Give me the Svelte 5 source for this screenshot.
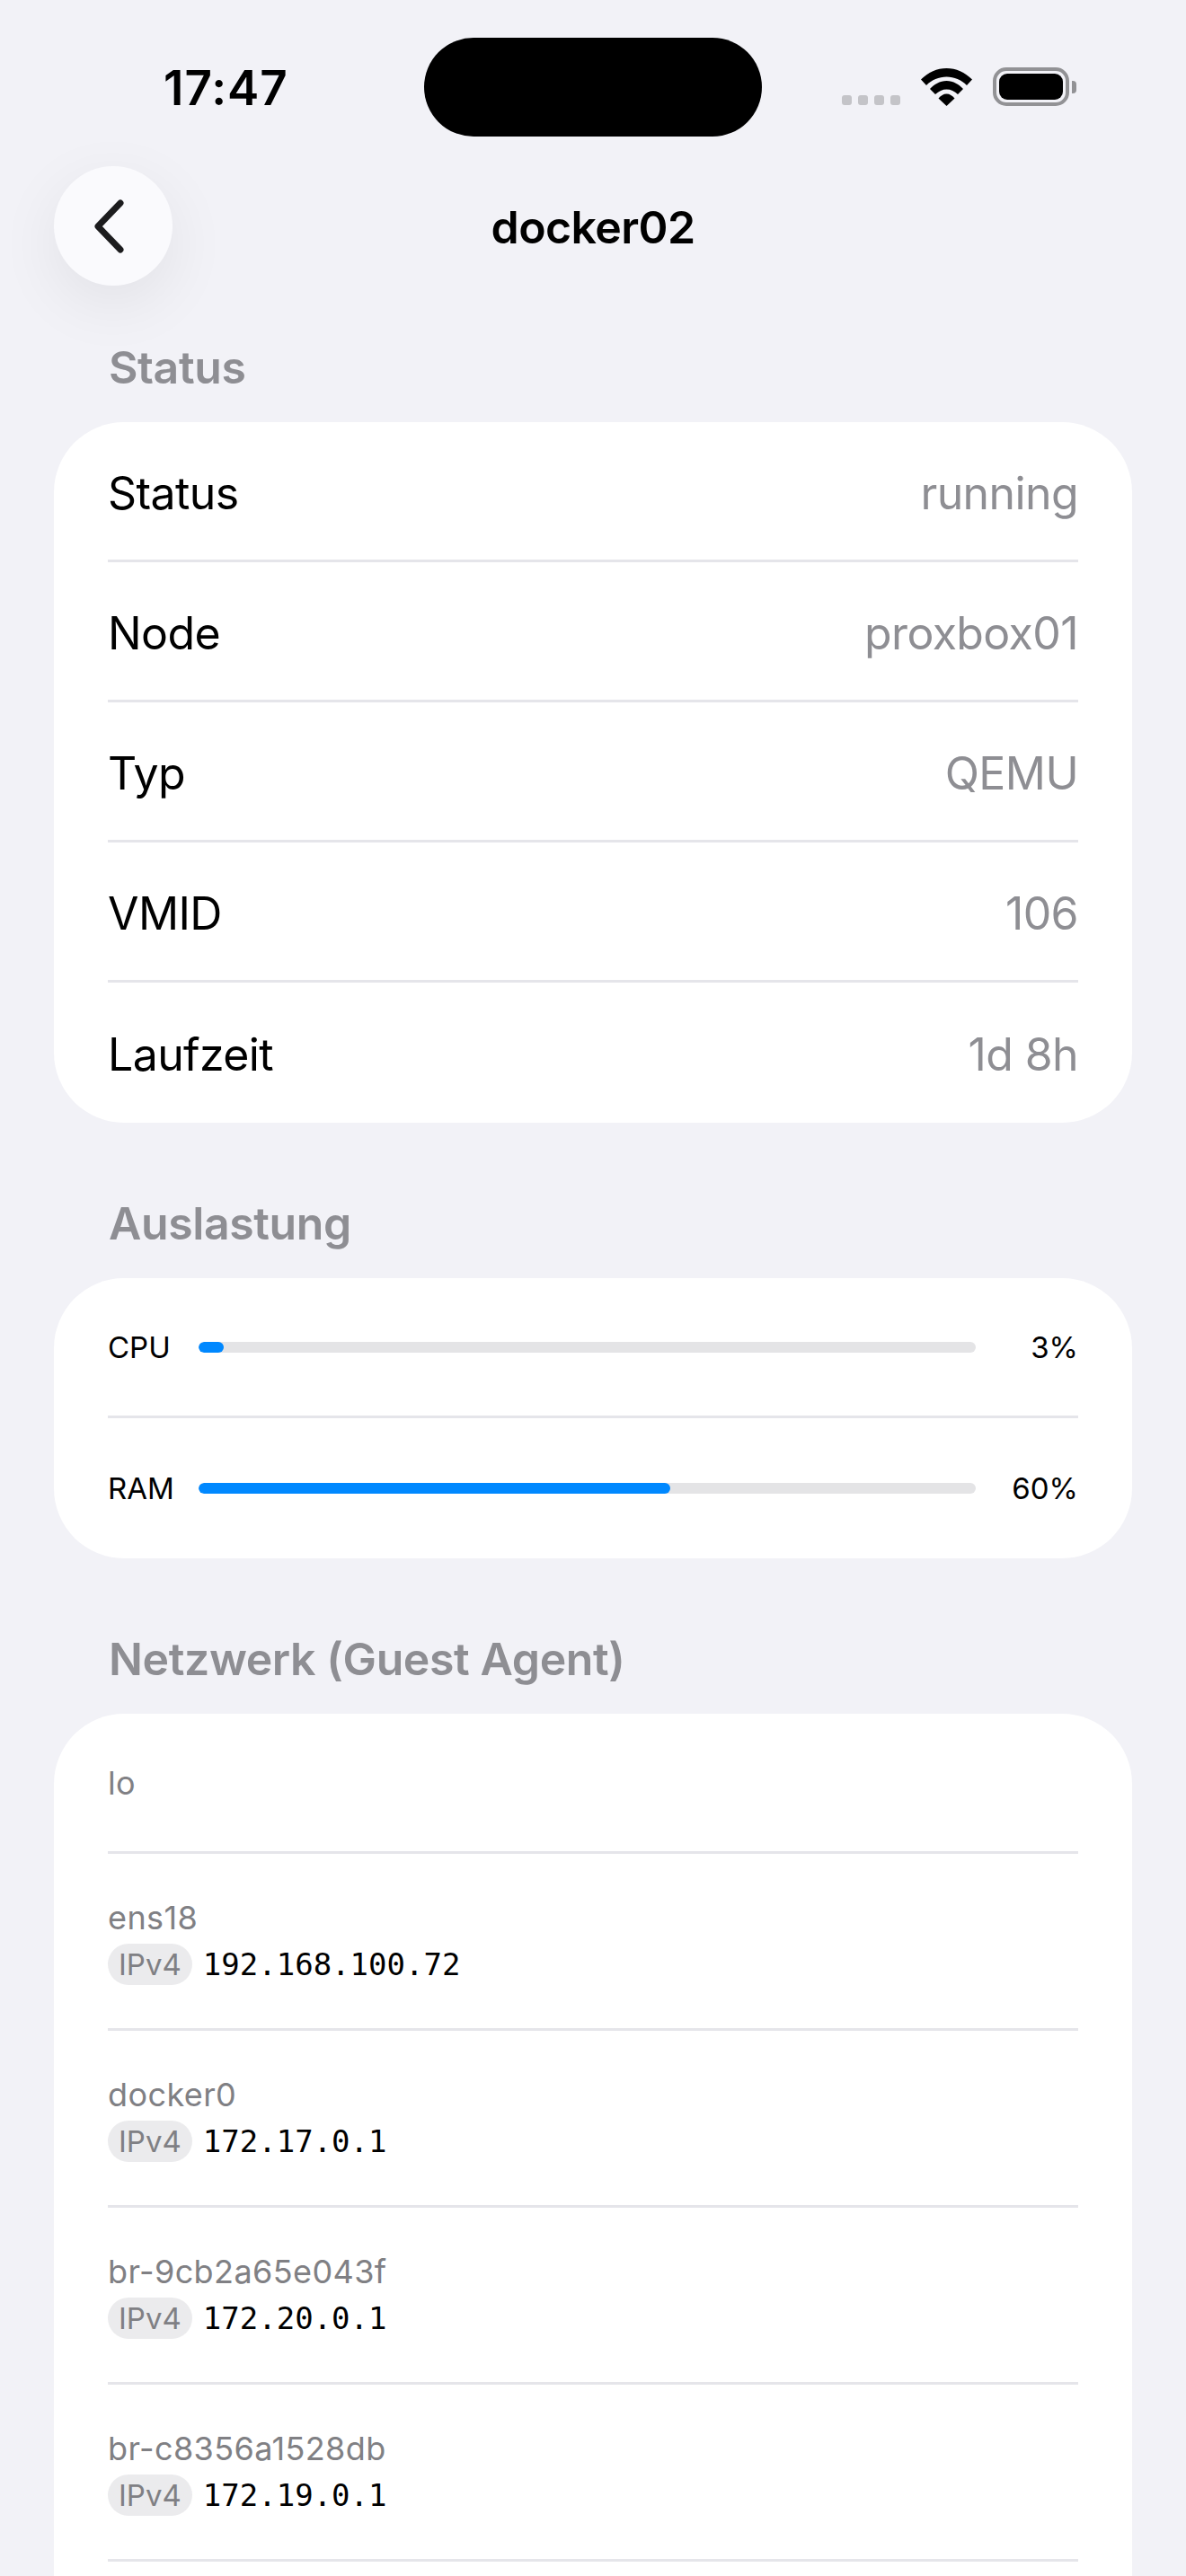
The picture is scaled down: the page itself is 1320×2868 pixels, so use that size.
<script>
    const info = [
        ["Status", "running"],
        ["Node", "proxbox01"],
        ["Typ", "QEMU"],
        ["VMID", "106"],
        ["Laufzeit", "1d 8h"],
    ];
    const usage = [
        { label: "CPU", percent: 3, bar: 3.2 },
        { label: "RAM", percent: 60, bar: 60.7 },
    ];
    const networks = [
        { name: "lo" },
        { name: "ens18", ip: "192.168.100.72" },
        { name: "docker0", ip: "172.17.0.1" },
        { name: "br-9cb2a65e043f", ip: "172.20.0.1" },
        { name: "br-c8356a1528db", ip: "172.19.0.1" },
    ];
</script>

<div class="screen">
    <header class="statusbar">
        <span class="time">17:47</span>
        <div class="island"></div>
        <div class="indicators">
            <div class="dots"><i></i><i></i><i></i><i></i></div>
            <svg class="wifi" width="57" height="42" viewBox="0 0 57 42">
                <path d="M0 12.500C8 4.500 18 0 28.500 0S49 4.500 57 12.500L51 19C45 13 37 9.500 28.500 9.500S12 13 6 19Z" />
                <path d="M10 23C14.500 18 21 14 28.500 14S42.500 18 47 23L41 29C37.500 25.500 33 23.500 28.500 23.500S20 25.500 16 29Z" />
                <path d="M19.500 33.500C22 30.500 25 28.500 28.500 28.500S35 30.500 37.500 33.500L28.500 42Z" />
            </svg>
            <div class="battery"><div class="cell"></div></div>
            <div class="nub"></div>
        </div>
    </header>

    <nav class="navbar">
        <button class="back" type="button" aria-label="Zurück">
            <svg width="42" height="60" viewBox="0 0 42 60" fill="none">
                <path d="M33 4 8 30l25 26" stroke="#1c1c1e" stroke-width="7" stroke-linecap="round" stroke-linejoin="round" />
            </svg>
        </button>
        <h1>docker02</h1>
    </nav>

    <section class="first">
        <h2>Status</h2>
        <div class="card">
            {#each info as [label, value]}
                <div class="row">
                    <span>{label}</span>
                    <span class="value">{value}</span>
                </div>
            {/each}
        </div>
    </section>

    <section>
        <h2>Auslastung</h2>
        <div class="card">
            {#each usage as item}
                <div class="row usage">
                    <span class="label">{item.label}</span>
                    <div class="track">
                        <div class="fill" style="width: {item.bar}%"></div>
                    </div>
                    <span class="percent">{item.percent}%</span>
                </div>
            {/each}
        </div>
    </section>

    <section>
        <h2>Netzwerk (Guest Agent)</h2>
        <div class="card open">
            {#each networks as net}
                <div class="row net">
                    <div class="iface">{net.name}</div>
                    {#if net.ip}
                        <div class="address">
                            <span class="tag">IPv4</span>
                            <span class="ip">{net.ip}</span>
                        </div>
                    {/if}
                </div>
            {/each}
        </div>
    </section>
</div>

<style>
    :global(body) {
        margin: 0;
        background: #f2f2f7;
    }
    .screen {
        width: 1320px;
        height: 2868px;
        overflow: hidden;
        background: #f2f2f7;
        font-family: Inter, "Liberation Sans", sans-serif;
        color: #000;
    }
    .statusbar {
        position: relative;
        height: 185px;
    }
    .time {
        position: absolute;
        left: 182px;
        top: 67px;
        font-size: 53px;
        line-height: 62px;
        font-weight: 600;
        letter-spacing: 1px;
    }
    .island {
        position: absolute;
        left: 472px;
        top: 42px;
        width: 376px;
        height: 110px;
        border-radius: 55px;
        background: #000;
    }
    .indicators {
        position: absolute;
        left: 937px;
        top: 75px;
        height: 43px;
        display: flex;
        align-items: center;
    }
    .dots {
        align-self: flex-end;
        display: flex;
        gap: 7px;
        margin-bottom: 1px;
        margin-right: 23px;
    }
    .dots i {
        width: 11px;
        height: 11px;
        border-radius: 3px;
        background: #c4c4c8;
    }
    .wifi {
        fill: #000;
        margin-right: 23px;
    }
    .battery {
        width: 85px;
        height: 43px;
        box-sizing: border-box;
        border: 4px solid #929295;
        border-radius: 15px;
        padding: 3px;
    }
    .cell {
        height: 100%;
        border-radius: 9px;
        background: #000;
    }
    .nub {
        width: 5px;
        height: 14px;
        margin-left: 3px;
        border-radius: 0 4px 4px 0;
        background: #929295;
    }
    .navbar {
        position: relative;
        height: 133px;
        display: flex;
        align-items: center;
        justify-content: center;
    }
    .back {
        position: absolute;
        left: 60px;
        top: 0;
        width: 132px;
        height: 133px;
        padding: 0 8px 0 0;
        border: 0;
        border-radius: 50%;
        background: #fafafd;
        box-shadow: 0 20px 70px rgba(0, 0, 0, 0.07);
        display: flex;
        align-items: center;
        justify-content: center;
    }
    h1 {
        margin: 2px 0 0;
        font-size: 50px;
        line-height: 62px;
        font-weight: 600;
        letter-spacing: -0.6px;
    }
    section {
        padding: 0 60px;
        margin-top: 82px;
    }
    section.first {
        margin-top: 61px;
    }
    h2 {
        margin: 0 0 31px;
        padding-left: 61px;
        font-size: 50px;
        line-height: 60px;
        font-weight: 600;
        letter-spacing: -0.4px;
        color: #8e8e93;
    }
    .card {
        background: #fff;
        border-radius: 78px;
        padding: 0 60px;
    }
    .card.open {
        padding-bottom: 200px;
    }
    .row {
        display: flex;
        align-items: center;
        justify-content: space-between;
        height: 156px;
        padding-top: 4px;
        box-sizing: border-box;
        font-size: 50px;
        letter-spacing: -0.6px;
        border-bottom: 3px solid #e5e5ea;
    }
    .card:not(.open) .row:last-child {
        border-bottom: 0;
    }
    .value {
        color: #8e8e93;
    }
    .usage {
        padding-top: 0;
        font-size: 33px;
        letter-spacing: 0;
        gap: 30px;
    }
    .label {
        width: 71px;
    }
    .track {
        flex: 1;
        height: 12px;
        border-radius: 6px;
        background: #e4e4e6;
        overflow: hidden;
    }
    .fill {
        height: 100%;
        border-radius: 6px;
        background: #0088ff;
    }
    .percent {
        width: 84px;
        text-align: right;
    }
    .net {
        height: auto;
        min-height: 156px;
        padding: 48px 0;
        flex-direction: column;
        align-items: flex-start;
        justify-content: center;
        letter-spacing: 0;
    }
    .iface {
        font-size: 36px;
        line-height: 46px;
        letter-spacing: 0.4px;
        color: #808084;
    }
    .address {
        display: flex;
        align-items: center;
        gap: 12px;
        margin-top: 6px;
    }
    .tag {
        padding: 0 12px;
        height: 46px;
        line-height: 46px;
        border-radius: 23px;
        background: #ebebed;
        font-size: 33px;
        color: #808084;
    }
    .ip {
        font-family: "DejaVu Sans Mono", monospace;
        font-size: 34px;
    }
</style>
